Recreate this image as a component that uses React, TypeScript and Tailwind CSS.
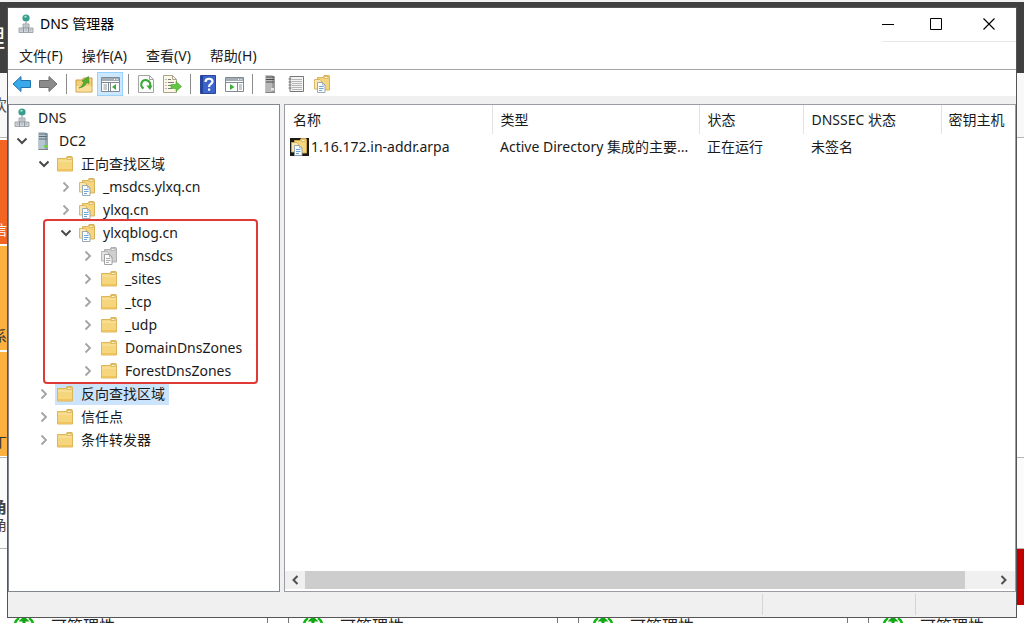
import type { ReactNode } from "react";

type IconName = "dns" | "server" | "folder" | "zone" | "grayZone";

type TreeItem = {
  label: string;
  level: number;
  icon: IconName;
  open?: boolean;
  selected?: boolean;
};

const topItems: TreeItem[] = [
  { label: "DNS", level: 0, icon: "dns" },
  { label: "DC2", level: 1, icon: "server", open: true },
  { label: "正向查找区域", level: 2, icon: "folder", open: true },
  { label: "_msdcs.ylxq.cn", level: 3, icon: "zone" },
  { label: "ylxq.cn", level: 3, icon: "zone" },
];

const blogItems: TreeItem[] = [
  { label: "ylxqblog.cn", level: 3, icon: "zone", open: true },
  { label: "_msdcs", level: 4, icon: "grayZone" },
  { label: "_sites", level: 4, icon: "folder" },
  { label: "_tcp", level: 4, icon: "folder" },
  { label: "_udp", level: 4, icon: "folder" },
  { label: "DomainDnsZones", level: 4, icon: "folder" },
  { label: "ForestDnsZones", level: 4, icon: "folder" },
];

const bottomItems: TreeItem[] = [
  { label: "反向查找区域", level: 2, icon: "folder", selected: true },
  { label: "信任点", level: 2, icon: "folder" },
  { label: "条件转发器", level: 2, icon: "folder" },
];

const indent = ["pl-[3px]", "pl-0", "pl-[22px]", "pl-[44px]", "pl-[66px]"];

function DnsIcon() {
  return (
    <svg width="16" height="20" viewBox="0 0 16 20" className="shrink-0">
      <circle cx="8" cy="4" r="3.6" fill="#3a9c8c" />
      <path d="M6 2.500l2-1 1 1.500-2 1z" fill="#9fe0c8" />
      <path d="M8 7.500v3" stroke="#8a949c" />
      <path d="M5 10h6v4H5z" fill="#d3d7db" stroke="#8d959c" strokeWidth="0.8" />
      <path d="M1 14h4.500v4.500H1zM5.500 14h5v4.500h-5zM10.500 14H15v4.500h-4.500z" fill="#d3d7db" stroke="#8d959c" strokeWidth="0.8" />
      <path d="M2.500 16h2M7 16h2M11.500 16h2M6.500 12h3" stroke="#8d959c" strokeWidth="0.7" />
    </svg>
  );
}

function ServerIcon({ dark }: { dark?: boolean }) {
  return (
    <svg width="16" height="20" viewBox="0 0 16 20" className="shrink-0">
      <path d="M3.500 1.500h6.500l3 1v16H3.500z" fill={dark ? "#9b9b9b" : "#93a6b3"} />
      <path d="M3.500 1.500H10v17H3.500z" fill={dark ? "#b9b9b9" : "#b7c5cf"} />
      <path d="M4 3h8M4 5.500h8M4 8h8" stroke={dark ? "#4a4a4a" : "#5c6c78"} />
      <path d="M3.500 18.500H13" stroke="#7c8389" />
      <rect x="9" y="14" width="3" height="2.500" fill={dark ? "#e5e5e5" : "#6fce4d"} />
    </svg>
  );
}

function FolderIcon() {
  return (
    <svg width="16" height="16" viewBox="0 0 16 16" className="shrink-0">
      <path d="M.5 2.500h8.500l1-2h5l.5 1.500v13H.5z" fill="#f6d67c" stroke="#d9b04f" strokeWidth="0.9" />
      <path d="M10.500 1.500h3.500v2h-4z" fill="#fff4cd" stroke="#c79d3d" strokeWidth="0.6" />
      <path d="M1 4.500h14v1H1z" fill="#fbe7a8" />
      <path d="M1 13h14v2H1z" fill="#efc45f" />
    </svg>
  );
}

function ZoneIcon({ gray }: { gray?: boolean }) {
  const line = gray ? "#a9a9a9" : "#d3ab50";
  return (
    <svg width="16" height="18" viewBox="0 0 16 18" className="shrink-0">
      <path d="M3.500 2.500H9l1-2h5l.5 1.500v13h-12z" fill={gray ? "#cfcfcf" : "#f6d67c"} stroke={line} strokeWidth="0.9" />
      <path d="M10.500 1.500H14v2h-4z" fill={gray ? "#efefef" : "#fff4cd"} stroke={line} strokeWidth="0.7" />
      <path d="M.5 4.500h5.500l1.500 1.500v8h-7z" fill={gray ? "#e3e3e3" : "#f9e6b0"} stroke={line} strokeWidth="0.8" />
      <path d="M3.500 7.500h5l2.500 2.500v7.500H3.500z" fill="#fff" stroke={gray ? "#999" : "#8ba2b5"} strokeWidth="0.9" />
      <path d="M8.500 7.500v2.500H11" fill="none" stroke={gray ? "#999" : "#8ba2b5"} strokeWidth="0.7" />
      <path d="M5 11.500h4.500M5 13.500h4.500M5 15.500h3" stroke={gray ? "#a0a0a0" : "#5b9bd5"} strokeWidth="0.9" />
    </svg>
  );
}

function ItemIcon({ name }: { name: IconName }) {
  if (name === "dns") return <DnsIcon />;
  if (name === "server") return <ServerIcon />;
  if (name === "folder") return <FolderIcon />;
  return <ZoneIcon gray={name === "grayZone"} />;
}

function TreeRow({ item }: { item: TreeItem }) {
  return (
    <li className={`flex h-[23px] items-center ${indent[item.level]}`}>
      {item.level > 0 && (
        <button aria-label={item.open ? "折叠" : "展开"} className="flex h-full w-6 shrink-0 items-center justify-center pl-0.5">
          {item.open ? (
            <svg width="12" height="8" viewBox="0 0 12 8" fill="none" stroke="#4a4a4a" strokeWidth="2">
              <path d="M1.500 1.500L6 6l4.500-4.500" />
            </svg>
          ) : (
            <svg width="8" height="12" viewBox="0 0 8 12" fill="none" stroke="#a3a3a3" strokeWidth="1.800">
              <path d="M1.500 1.500L6 6l-4.500 4.500" />
            </svg>
          )}
        </button>
      )}
      <button
        className={`flex h-[23px] items-center gap-2 pr-1 pl-0.5 whitespace-nowrap ${item.selected ? "bg-[#cce4fb]" : ""}`}
      >
        <ItemIcon name={item.icon} />
        <span>{item.label}</span>
      </button>
    </li>
  );
}

function ToolButton({ label, active, children }: { label: string; active?: boolean; children: ReactNode }) {
  return (
    <button
      aria-label={label}
      className={`flex h-6 w-[26px] items-center justify-center ${active ? "border border-[#99d1ff] bg-[#cce8ff]" : ""}`}
    >
      {children}
    </button>
  );
}

function Separator() {
  return (
    <div className="flex w-2.5 justify-center">
      <div className="h-5 w-px bg-[#8c8c8c]" />
    </div>
  );
}

function Arrow({ back }: { back?: boolean }) {
  return (
    <svg width="20" height="18" viewBox="0 0 20 18" className="shrink-0">
      {back ? (
        <path d="M1 9l8-7.500v4h9.500v7H9v4z" fill="#38a9ea" stroke="#2272ad" strokeWidth="1" />
      ) : (
        <path d="M19 9l-8-7.500v4H1.500v7H11v4z" fill="#8b8b8b" stroke="#6c6c6c" strokeWidth="1" />
      )}
    </svg>
  );
}

function PaneIcon({ right }: { right?: boolean }) {
  return (
    <svg width="19" height="17" viewBox="0 0 19 17" className="shrink-0">
      <path d="M.5 1.500h18v14H.5z" fill="#fff" stroke="#7f8a93" />
      <path d="M1 2h17v3H1z" fill="#a4adb5" />
      <path d="M13 3.500h1M15.500 3.500h1" stroke="#fff" />
      <path d="M1 6.500h17" stroke="#7f8a93" />
      {right ? (
        <>
          <path d="M12.500 7v8" stroke="#7f8a93" />
          <path d="M14 9h3M14 11h3M14 13h3" stroke="#8d98a1" />
          <path d="M5 8l4.500 3L5 14z" fill="#3fae3c" />
        </>
      ) : (
        <>
          <path d="M7.500 7v8M9.500 7v8" stroke="#7f8a93" />
          <path d="M2.500 9h3.500M2.500 11h3.500M2.500 13h3.500" stroke="#8d98a1" />
          <path d="M15 8l-4 3 4 3z" fill="#3fae3c" />
        </>
      )}
    </svg>
  );
}

function Toolbar() {
  return (
    <div className="flex h-[26px] items-center bg-white px-px pt-0.5">
      <ToolButton label="后退"><Arrow back /></ToolButton>
      <ToolButton label="前进"><Arrow /></ToolButton>
      <Separator />
      <ToolButton label="上移一级">
        <svg width="18" height="18" viewBox="0 0 18 18">
          <path d="M1 5h6l1.500-2H17v14H1z" fill="#f3cf78" stroke="#c99d42" />
          <path d="M1.500 11h15v5.500h-15z" fill="#f8df9c" />
          <path d="M4 13c2-1 4-3 5-6L7 6l6.500-4.500.5 7-2-1c-1.500 3-4 5-8 5.500z" fill="#57ad2f" stroke="#3d8a20" strokeWidth="0.6" />
        </svg>
      </ToolButton>
      <ToolButton label="显示/隐藏控制台树" active><PaneIcon /></ToolButton>
      <Separator />
      <ToolButton label="刷新">
        <svg width="16" height="18" viewBox="0 0 16 18" fill="none">
          <path d="M.5.5h11l4 4v13H.5z" fill="#fbfbfb" stroke="#a4a4a4" />
          <path d="M11.500.5v4h4" stroke="#a4a4a4" />
          <path d="M5.500 13.500A4.500 4.500 0 1 1 12 11" stroke="#3aa836" strokeWidth="2.200" />
          <path d="M8.500 10.500h6L12 15z" fill="#3aa836" />
        </svg>
      </ToolButton>
      <ToolButton label="导出列表">
        <svg width="19" height="18" viewBox="0 0 19 18" fill="none">
          <path d="M.5.5h9l4 4v13H.5z" fill="#fdf8e6" stroke="#aaa38e" />
          <path d="M9.500.5v4h4" stroke="#aaa38e" />
          <path d="M2.500 4.500h1M5 4.500h3M2.500 7.500h1M5 7.500h6M2.500 10.500h1M5 10.500h3M2.500 13.500h1M5 13.500h4" stroke="#7a7a7a" />
          <path d="M8 9.500h5v-3l5.500 5-5.500 5v-3H8z" fill="#62c544" stroke="#45a52c" strokeWidth="0.6" />
        </svg>
      </ToolButton>
      <Separator />
      <ToolButton label="帮助">
        <svg width="16" height="19" viewBox="0 0 16 19" fill="none">
          <path d="M.5.5h15v18H.5z" fill="#3c63cc" stroke="#2a469a" />
          <path d="M1 1h2v17H1z" fill="#26449c" />
          <path d="M5.500 7C5.500 2.500 12.500 3 12.500 6.500c0 2.500-3.500 2.500-3.500 5.500" stroke="#fff" strokeWidth="2.200" />
          <path d="M8 13.500h2.200v2.200H8z" fill="#fff" />
        </svg>
      </ToolButton>
      <ToolButton label="显示/隐藏操作窗格"><PaneIcon right /></ToolButton>
      <Separator />
      <ToolButton label="新建服务器"><ServerIcon dark /></ToolButton>
      <ToolButton label="新建记录">
        <svg width="17" height="18" viewBox="0 0 17 18" fill="none">
          <path d="M2 1.500h13.500v15H2z" fill="#f4f4f4" stroke="#777" />
          <path d="M4 4.500h10M4 6.500h10M4 8.500h10M4 10.500h10M4 12.500h10M4 14.500h10" stroke="#a5a5a5" strokeWidth="0.8" />
          <path d="M.5 4h3M.5 7h3M.5 10h3M.5 13h3" stroke="#666" strokeWidth="0.9" />
        </svg>
      </ToolButton>
      <ToolButton label="新建区域"><ZoneIcon /></ToolButton>
    </div>
  );
}

// 窗口后面露出的页面
function Backdrop() {
  return (
    <div className="absolute inset-0 flex flex-col justify-between overflow-hidden bg-white">
      <div className="flex flex-col">
        <div className="flex h-[73px] items-center border-t-2 border-[#f2f2f2] bg-[#404040]">
          <div className="flex w-[5px] justify-end overflow-hidden text-2xl text-white">理</div>
        </div>
        <div className="flex h-[65px] items-center border-b border-[#b5b5b5] bg-[#f8f8f8]">
          <div className="flex w-[7px] justify-end overflow-hidden text-base text-[#555]">欢</div>
        </div>
        <div className="flex w-[7px] flex-col gap-0.5 pt-0.5">
          <div className="flex h-[104px] items-end justify-end overflow-hidden bg-[#f26522] pb-1 text-white">信</div>
          <div className="flex h-[104px] items-end justify-end overflow-hidden bg-[#fbb040] pb-1 text-[#333]">系</div>
          <div className="flex h-[104px] items-end justify-end overflow-hidden bg-[#fbb040] pb-1 text-[#333]">丁</div>
        </div>
        <div className="mt-px h-[92px] border-y border-[#b5b5b5] bg-[#fbfbfb]">
          <div className="flex w-[7px] flex-col items-end overflow-hidden pt-10 leading-[18px] text-[#444]">
            <span className="text-base leading-[18px] font-bold">角</span>
            <span>角</span>
          </div>
        </div>
        <div className="h-14 w-2 self-end bg-[#c00000]" />
      </div>
      <div className="flex h-[7px] gap-5 overflow-hidden">
        {[0, 1, 2, 3].map((card) => (
          <div key={card} className="flex w-[270px] shrink-0 gap-4 border-x border-[#777] pl-[13px] first:w-[268px] first:border-l-0">
            <svg width="22" height="22" viewBox="0 0 22 22" className="shrink-0">
              <path d="M6 2Q1.500 5 1.500 11t4.500 9M16 2q4.500 3 4.500 9T16 20" fill="none" stroke="#12b512" strokeWidth="2.500" />
              <path d="M11 0l5.500 5.500h-4V17h-3V5.500h-4z" fill="#12a512" />
            </svg>
            <span className="text-base leading-5 text-[#222]">可管理性</span>
          </div>
        ))}
      </div>
    </div>
  );
}

function DetailPane() {
  const head = "h-[29px] border-r border-[#e2e2e2] pl-2 text-left font-normal whitespace-nowrap";
  const cell = "h-[25px] truncate pl-2";
  return (
    <section className="flex min-w-0 flex-1 flex-col border border-[#9a9da3] bg-white">
      <div className="flex-1 overflow-hidden">
        <table className="w-full table-fixed border-collapse">
          <thead>
            <tr>
              <th className={`w-[207px] ${head}`}>名称</th>
              <th className={`w-[207px] ${head}`}>类型</th>
              <th className={`w-[104px] ${head}`}>状态</th>
              <th className={`w-[138px] ${head}`}>DNSSEC 状态</th>
              <th className="pl-[7px] text-left font-normal whitespace-nowrap">密钥主机</th>
            </tr>
          </thead>
          <tbody>
            <tr>
              <td className="pl-[5px]">
                <div className="flex items-center gap-0.5">
                  <span className="flex h-[18px] w-[19px] items-center bg-[#1c1a14] pl-px">
                    <ZoneIcon />
                  </span>
                  1.16.172.in-addr.arpa
                </div>
              </td>
              <td className={cell}>Active Directory 集成的主要...</td>
              <td className={cell}>正在运行</td>
              <td className={cell}>未签名</td>
              <td />
            </tr>
          </tbody>
        </table>
      </div>
      <div className="mb-0.5 flex h-[18px] bg-[#f0f0f0]">
        <button aria-label="向左滚动" className="flex w-5 items-center justify-center">
          <svg width="8" height="10" viewBox="0 0 8 10" fill="none" stroke="#505050" strokeWidth="2">
            <path d="M6.500 1L2.500 5l4 4" />
          </svg>
        </button>
        <div className="flex-1">
          <div className="h-full w-[96%] bg-[#cdcdcd]" />
        </div>
        <button aria-label="向右滚动" className="flex w-[22px] items-center justify-center">
          <svg width="8" height="10" viewBox="0 0 8 10" fill="none" stroke="#505050" strokeWidth="2">
            <path d="M1.500 1l4 4-4 4" />
          </svg>
        </button>
      </div>
    </section>
  );
}

export default function App() {
  return (
    <div className="relative h-screen w-full overflow-hidden px-[7px] pt-[7px] pb-[5px] font-['Noto_Sans','Noto_Sans_CJK_SC',sans-serif] text-sm leading-5 text-[#1a1a1a]">
      <Backdrop />
      <main className="relative flex h-full flex-col border border-[#555] bg-[#f0f0f0]">
        <header className="flex h-[34px] items-center justify-between bg-white pl-2.5 text-black">
          <div className="flex items-center gap-1.5 pb-0.5">
            <DnsIcon />
            <h1>DNS 管理器</h1>
          </div>
          <div className="flex h-full border-b border-[#e8e8e8] pb-0.5">
            <button aria-label="最小化" className="flex w-7 items-center">
              <svg width="12" height="12" viewBox="0 0 12 12" stroke="#000">
                <path d="M0 6.500h12" />
              </svg>
            </button>
            <button aria-label="最大化" className="flex w-[52px] items-center justify-center">
              <svg width="12" height="12" viewBox="0 0 12 12" fill="none" stroke="#000">
                <path d="M.5.5h11v11H.5z" />
              </svg>
            </button>
            <button aria-label="关闭" className="flex w-[54px] items-center justify-center">
              <svg width="12" height="12" viewBox="0 0 12 12" stroke="#000" strokeWidth="1.200">
                <path d="M.5.5l11 11M11.500.5l-11 11" />
              </svg>
            </button>
          </div>
        </header>
        <nav className="flex h-7 items-center gap-px border-b border-[#a5a5a5] bg-white px-0.5">
          {["文件(F)", "操作(A)", "查看(V)", "帮助(H)"].map((name) => (
            <button key={name} className="px-[9px]">{name}</button>
          ))}
        </nav>
        <Toolbar />
        <div className="mt-2 flex min-h-0 flex-1 gap-1">
          <aside className="w-[272px] shrink-0 overflow-hidden border border-[#82878f] bg-white pt-px">
            <ul>
              {topItems.map((item) => (
                <TreeRow key={item.label} item={item} />
              ))}
            </ul>
            <div className="relative">
              <ul>
                {blogItems.map((item) => (
                  <TreeRow key={item.label} item={item} />
                ))}
              </ul>
              <div className="pointer-events-none absolute -inset-y-0.5 right-[21px] left-[34px] rounded border-2 border-[#e03a36]" />
            </div>
            <ul>
              {bottomItems.map((item) => (
                <TreeRow key={item.label} item={item} />
              ))}
            </ul>
          </aside>
          <DetailPane />
        </div>
        <footer className="flex h-[25px] justify-end py-0.5">
          <div className="w-[153px] border-l border-[#d5d5d5]" />
          <div className="w-[101px] border-l border-[#d5d5d5]" />
        </footer>
      </main>
    </div>
  );
}
